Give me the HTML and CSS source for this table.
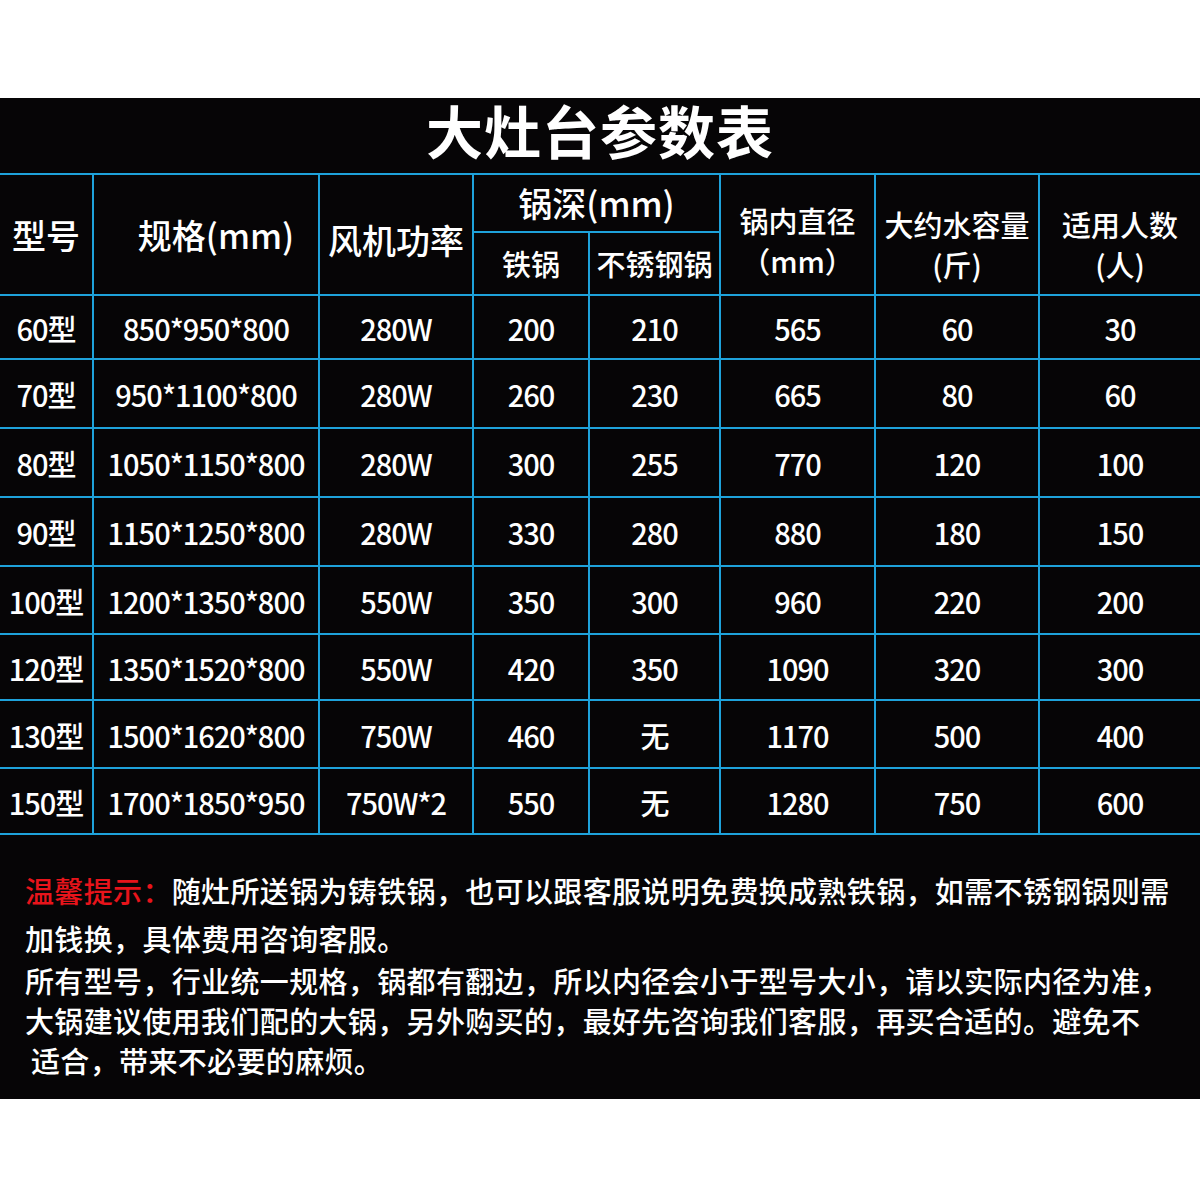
FILE: index.html
```html
<!DOCTYPE html>
<html lang="zh-CN">
<head>
<meta charset="utf-8">
<title>大灶台参数表</title>
<link rel="stylesheet" href="styles.css">
</head>
<body>
<div class="board">
  <h1 class="title">大灶台参数表</h1>
  <div class="grid">
    <div class="cell h-big span2">型号</div>
    <div class="cell h-big span2 shift">规格(mm)</div>
    <div class="cell h-big span2 low">风机功率</div>
    <div class="cell h-big spancol">锅深(mm)</div>
    <div class="cell h-sm span2 two">锅内直径<br>（mm）</div>
    <div class="cell h-sm span2 two lower">大约水容量<br>(斤)</div>
    <div class="cell h-sm span2 two lower">适用人数<br>(人)</div>
    <div class="cell h-sm">铁锅</div>
    <div class="cell h-sm">不锈钢锅</div>

    <div class="cell d">60型</div><div class="cell d">850*950*800</div><div class="cell d">280W</div><div class="cell d">200</div><div class="cell d">210</div><div class="cell d">565</div><div class="cell d">60</div><div class="cell d">30</div>
    <div class="cell d">70型</div><div class="cell d">950*1100*800</div><div class="cell d">280W</div><div class="cell d">260</div><div class="cell d">230</div><div class="cell d">665</div><div class="cell d">80</div><div class="cell d">60</div>
    <div class="cell d">80型</div><div class="cell d">1050*1150*800</div><div class="cell d">280W</div><div class="cell d">300</div><div class="cell d">255</div><div class="cell d">770</div><div class="cell d">120</div><div class="cell d">100</div>
    <div class="cell d">90型</div><div class="cell d">1150*1250*800</div><div class="cell d">280W</div><div class="cell d">330</div><div class="cell d">280</div><div class="cell d">880</div><div class="cell d">180</div><div class="cell d">150</div>
    <div class="cell d">100型</div><div class="cell d">1200*1350*800</div><div class="cell d">550W</div><div class="cell d">350</div><div class="cell d">300</div><div class="cell d">960</div><div class="cell d">220</div><div class="cell d">200</div>
    <div class="cell d">120型</div><div class="cell d">1350*1520*800</div><div class="cell d">550W</div><div class="cell d">420</div><div class="cell d">350</div><div class="cell d">1090</div><div class="cell d">320</div><div class="cell d">300</div>
    <div class="cell d">130型</div><div class="cell d">1500*1620*800</div><div class="cell d">750W</div><div class="cell d">460</div><div class="cell d">无</div><div class="cell d">1170</div><div class="cell d">500</div><div class="cell d">400</div>
    <div class="cell d">150型</div><div class="cell d">1700*1850*950</div><div class="cell d">750W*2</div><div class="cell d">550</div><div class="cell d">无</div><div class="cell d">1280</div><div class="cell d">750</div><div class="cell d">600</div>
  </div>
  <div class="notes">
    <p class="p1"><span class="red">温馨提示：</span>随灶所送锅为铸铁锅，也可以跟客服说明免费换成熟铁锅，如需不锈钢锅则需<br>加钱换，具体费用咨询客服。</p>
    <p class="p2">所有型号，行业统一规格，锅都有翻边，所以内径会小于型号大小，请以实际内径为准，<br>大锅建议使用我们配的大锅，另外购买的，最好先咨询我们客服，再买合适的。避免不<br><span class="ind">适合，带来不必要的麻烦。</span></p>
  </div>
</div>
</body>
</html>
```

FILE: styles.css
```css
html, body {
  margin: 0;
  padding: 0;
  background: #ffffff;
}
body {
  padding-top: 98px;
  font-family: "Noto Sans CJK SC", "Noto Sans", sans-serif;
  color: #ffffff;
}
.board {
  background: #060506;
  height: 1001px;
  display: flex;
  flex-direction: column;
}
.title {
  margin: 0;
  height: 75px;
  box-sizing: border-box;
  padding-bottom: 12px;
  display: flex;
  align-items: center;
  justify-content: center;
  font-size: 57px;
  font-weight: 700;
  line-height: 1;
  letter-spacing: 1px;
}
.grid {
  display: grid;
  grid-template-columns: 92px 224px 152px 114px 129px 153px 162px 160px;
  grid-template-rows: 56px 61px 62px 67px 67px 67px 66px 64px 66px 64px;
  gap: 2px;
  padding: 2px 0;
  background: #1ea2da;
}
.cell {
  background: #060506;
  display: flex;
  align-items: center;
  justify-content: center;
  text-align: center;
  white-space: nowrap;
}
.span2 { grid-row: span 2; }
.spancol { grid-column: span 2; }
.h-big {
  font-size: 34px;
  font-weight: 500;
  line-height: 1;
}
.h-sm {
  font-size: 29px;
  font-weight: 500;
  line-height: 1.35;
}
.shift { padding-left: 20px; }
.low { padding-top: 10px; }
.two { padding-top: 12px; }
.two.lower { padding-top: 20px; }
.d {
  font-size: 29px;
  font-weight: 500;
  letter-spacing: -1px;
  line-height: 1;
  padding-top: 2px;
}
.notes {
  padding: 31px 0 0 25px;
  font-size: 29px;
  font-weight: 500;
  letter-spacing: 0.35px;
}
.notes p { margin: 0; white-space: nowrap; }
.p1 { line-height: 48px; }
.p2 { line-height: 40px; margin-top: -2px !important; }
.red { color: #e8141b; }
.ind { padding-left: 6px; }
```
